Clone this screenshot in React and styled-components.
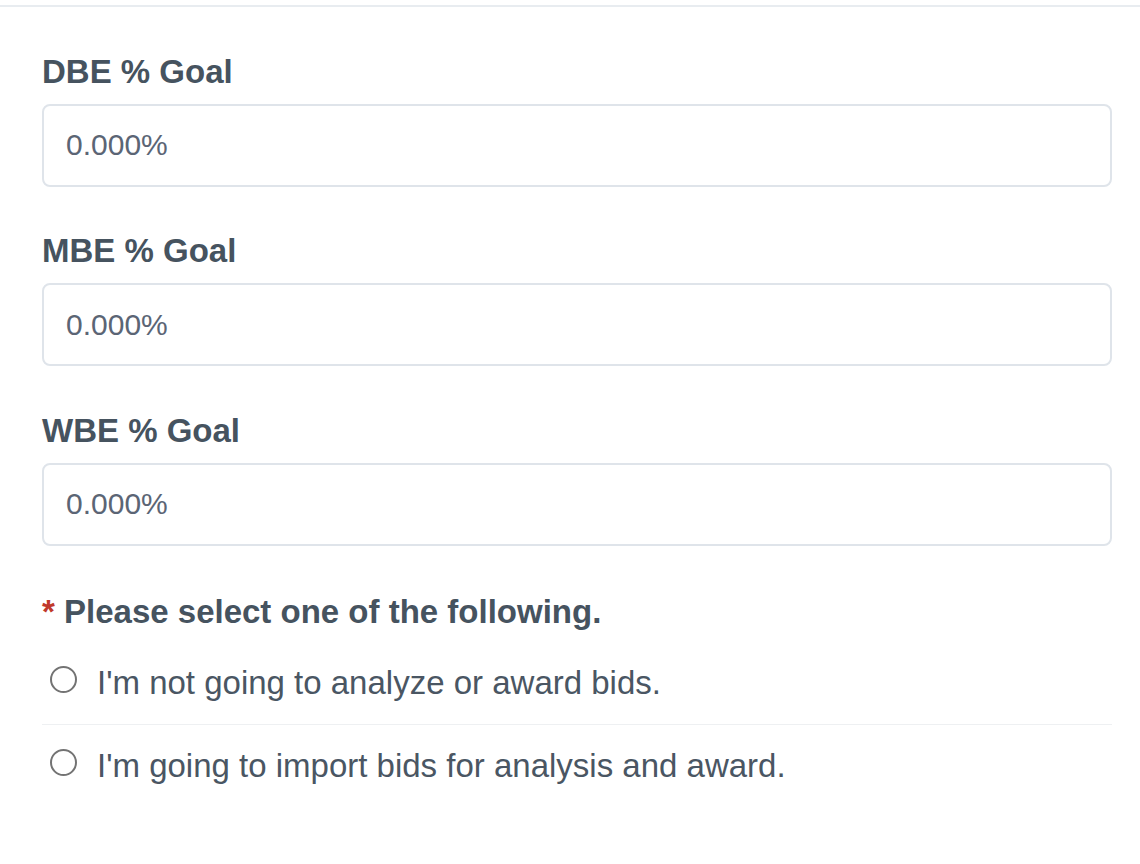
import React from "react";
import styled, { createGlobalStyle } from "styled-components";

const GlobalStyle = createGlobalStyle`
  html, body {
    margin: 0;
    padding: 0;
    background: #ffffff;
  }
  body {
    font-family: "Liberation Sans", Arial, Helvetica, sans-serif;
  }
  * { box-sizing: border-box; }
`;

const Page = styled.div`
  width: 1140px;
  padding-top: 5px;
`;

const TopRule = styled.div`
  height: 2px;
  background: #e8ecf0;
`;

const Form = styled.form`
  display: flex;
  flex-direction: column;
  gap: 44.5px;
  padding: 44.5px 28px 0 42px;
`;

const Field = styled.div`
  display: flex;
  flex-direction: column;
  gap: 12px;
`;

const Label = styled.label`
  font-size: 33px;
  line-height: 40px;
  font-weight: 700;
  color: #46535f;
`;

const TextInput = styled.input`
  width: 100%;
  height: 83px;
  border: 2px solid #dfe4ea;
  border-radius: 8px;
  padding: 0 22px;
  font-family: "Liberation Sans", Arial, Helvetica, sans-serif;
  font-size: 30px;
  color: #5b6575;
  background: #ffffff;
  outline: none;
`;

const Question = styled.fieldset`
  border: 0;
  margin: 1.5px 0 0 0;
  padding: 0;
  min-width: 0;
  display: flex;
  flex-direction: column;
`;

const Legend = styled.div`
  font-size: 33px;
  line-height: 40px;
  font-weight: 700;
  color: #46535f;
  margin-bottom: 10px;
`;

const Required = styled.span`
  color: #c0392b;
`;

const Option = styled.label`
  display: flex;
  align-items: flex-start;
  gap: 20px;
  padding: 21px 0 21px 8px;
  border-top: ${(p) => (p.$first ? "0" : "1.5px solid #eef0f2")};
  cursor: pointer;
`;

const Radio = styled.input`
  appearance: none;
  -webkit-appearance: none;
  flex: none;
  width: 27px;
  height: 27px;
  margin: 3px 0 0 0;
  border: 2.5px solid #737373;
  border-radius: 50%;
  background: #ffffff;
`;

const OptionText = styled.span`
  font-size: 33px;
  line-height: 40px;
  color: #4a5663;
`;

const fields = ["DBE % Goal", "MBE % Goal", "WBE % Goal"];
const options = [
  "I'm not going to analyze or award bids.",
  "I'm going to import bids for analysis and award.",
];

export default function App() {
  return (
    <>
      <GlobalStyle />
      <Page>
        <TopRule />
        <Form onSubmit={(e) => e.preventDefault()}>
          {fields.map((f) => (
            <Field key={f}>
              <Label>{f}</Label>
              <TextInput type="text" defaultValue="0.000%" />
            </Field>
          ))}
          <Question>
            <Legend>
              <Required>*</Required> Please select one of the following.
            </Legend>
            {options.map((o, i) => (
              <Option key={o} $first={i === 0}>
                <Radio type="radio" name="bids" />
                <OptionText>{o}</OptionText>
              </Option>
            ))}
          </Question>
        </Form>
      </Page>
    </>
  );
}
